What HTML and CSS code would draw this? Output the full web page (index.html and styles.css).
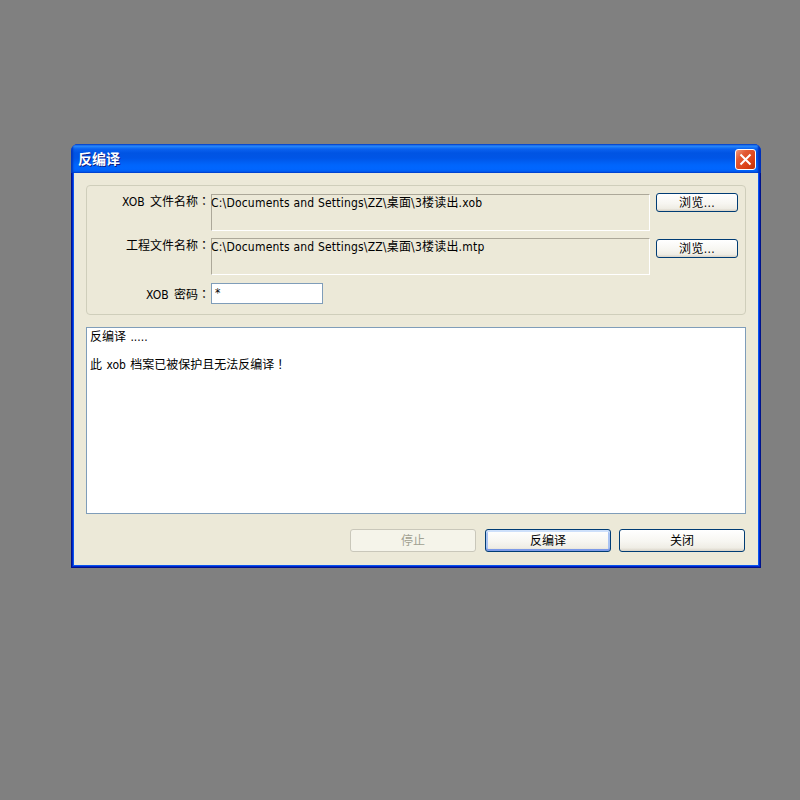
FILE: index.html
```html
<!DOCTYPE html>
<html lang="zh-CN">
<head>
    <meta charset="UTF-8">
    <meta name="viewport" content="width=device-width, initial-scale=1.0">
    <title>反编译</title>
    <link rel="stylesheet" href="styles.css">
</head>
<body>
    <div class="dialog">
        <div class="titlebar">
            <span class="title">反编译</span>
            <button class="close">
                <svg width="13" height="13" viewBox="0 0 13 13">
                    <path d="M1.5 1.5 L11.5 11.5 M11.5 1.5 L1.5 11.5" stroke="#fff" stroke-width="2" fill="none"/>
                </svg>
            </button>
        </div>
        <div class="content">
            <div class="group">
                <div class="row">
                    <span class="label">XOB 文件名称<span class="mark" lang="zh-TW">：</span></span>
                    <div class="path">C:\Documents and Settings\ZZ\桌面\3楼读出.xob</div>
                    <button class="btn browse">浏览...</button>
                </div>
                <div class="row">
                    <span class="label">工程文件名称<span class="mark" lang="zh-TW">：</span></span>
                    <div class="path">C:\Documents and Settings\ZZ\桌面\3楼读出.mtp</div>
                    <button class="btn browse second">浏览...</button>
                </div>
                <div class="row password-row">
                    <span class="label">XOB 密码<span class="mark" lang="zh-TW">：</span></span>
                    <div class="password">*</div>
                </div>
            </div>
            <div class="log">
                <div>反编译 .....</div>
                <div>&nbsp;</div>
                <div>此 xob 档案已被保护且无法反编译<span class="mark" lang="zh-TW">！</span></div>
            </div>
            <div class="footer">
                <button class="btn stop" disabled>停止</button>
                <button class="btn default">反编译</button>
                <button class="btn">关闭</button>
            </div>
        </div>
    </div>
</body>
</html>
```

FILE: styles.css
```css
* {
    box-sizing: border-box;
}
body {
    margin: 0;
    height: 800px;
    overflow: hidden;
    background: #808080;
    padding: 144px 0 0 71px;
    font: 12px/14px "DejaVu Sans Condensed", "Noto Sans CJK SC", sans-serif;
    color: #000;
}
button {
    font: inherit;
    color: inherit;
    padding: 0;
    margin: 0;
}
.mark {
    font-family: "Noto Sans CJK TC", sans-serif;
    line-height: 1;
}
.dialog {
    width: 690px;
    height: 424px;
    display: flex;
    flex-direction: column;
    border-radius: 7px 7px 0 0;
    background: #0831d9;
    overflow: hidden;
}
.titlebar {
    position: relative;
    z-index: 1;
    height: 29px;
    flex: none;
    display: flex;
    align-items: center;
    justify-content: space-between;
    padding: 1px 5px 0 7px;
    background: linear-gradient(to bottom, #0850d8 0, #2a8afc 2px, #0a62ef 5px, #0054e3 9px, #0055e6 14px, #0065fc 21px, #0066ff 25px, #005cf0 28px, #0048d8 29px);
    box-shadow: inset 2px 0 2px #0038c0, inset -3px 0 2px #0030b8;
}
.title {
    color: #fff;
    font-size: 14px;
    font-weight: bold;
    text-shadow: 1px 1px 0 #0f1e80;
}
.close {
    width: 21px;
    height: 21px;
    display: flex;
    align-items: center;
    justify-content: center;
    border: 1px solid #fff;
    border-radius: 3px;
    background: linear-gradient(135deg, #f0997c 0, #e25a35 30%, #dc4014 70%, #bc3008 100%);
}
.content {
    flex: 1;
    margin: 0 3px 3px;
    padding: 12px 12px 0;
    background: #ece9d8;
    box-shadow: 0 0 0 1px #0855ee, 0 0 0 2px #0024c8, 0 0 0 3px #00138c;
}
.group {
    width: 660px;
    height: 130px;
    padding: 8px 7px 0 0;
    border: 1px solid #cfcebb;
    border-radius: 4px;
}
.row {
    display: flex;
    height: 37px;
    margin-bottom: 7px;
}
.label {
    width: 124px;
    padding: 1px 1px 0 0;
    text-align: right;
    white-space: nowrap;
    word-spacing: 2px;
}
.path {
    width: 439px;
    height: 37px;
    padding-top: 1px;
    border: 1px solid;
    border-color: #aca899 #fff #fff #aca899;
    white-space: nowrap;
    letter-spacing: 0.2px;
    text-indent: -1px;
}
.btn {
    width: 126px;
    height: 23px;
    padding-top: 1px;
    border: 1px solid #003c74;
    border-radius: 3px;
    background: linear-gradient(to bottom, #fff 0, #f7f6f1 55%, #efede5 85%, #d8d2c6 100%);
}
.btn.browse {
    width: 82px;
    height: 19px;
    margin: -1px 0 0 6px;
    letter-spacing: 0.3px;
}
.btn.second {
    margin-top: 1px;
}
.btn.default {
    box-shadow: inset 0 2px 0 #cee0fa, inset 0 -2px 0 #7d9ae8, inset 2px 0 0 #a9c3f2, inset -2px 0 0 #a9c3f2;
}
.btn:disabled {
    color: #a1a192;
    border-color: #c9c7ba;
    background: #f5f4ea;
}
.btn.stop {
    margin-right: 1px;
}
.password-row {
    margin-top: 8px;
}
.password-row .label {
    padding-top: 5px;
}
.password {
    width: 112px;
    height: 21px;
    padding: 2px 3px;
    border: 1px solid #7f9db9;
    background: #fff;
}
.log {
    width: 660px;
    height: 187px;
    margin-top: 12px;
    padding: 2px 3px;
    border: 1px solid #7f9db9;
    background: #fff;
    word-spacing: 1px;
}
.footer {
    display: flex;
    justify-content: flex-end;
    gap: 8px;
    padding: 15px 1px 0 0;
}
```
